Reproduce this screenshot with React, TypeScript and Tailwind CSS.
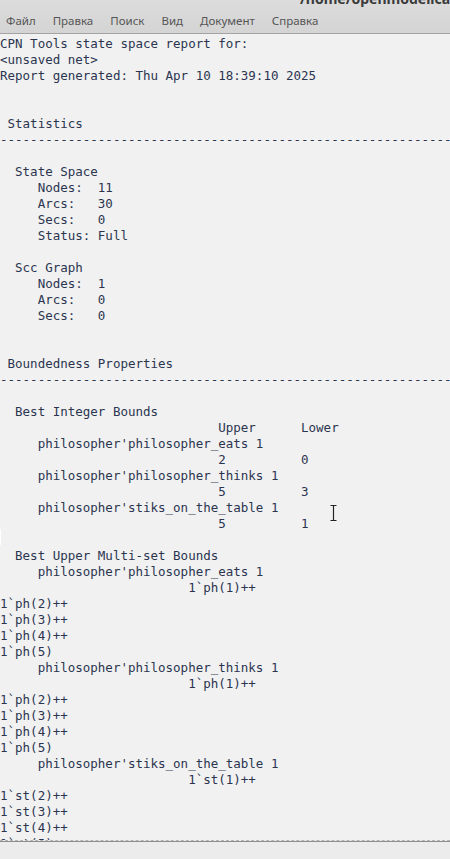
import React from "react";

const mono = { fontFamily: '"DejaVu Sans Mono", "Liberation Mono", monospace' };
const sans = { fontFamily: '"Noto Sans", "DejaVu Sans", sans-serif' };

const dashes = "-".repeat(70);
const pad = (n: number) => " ".repeat(n);

const lines: string[] = [
  "CPN Tools state space report for:",
  "<unsaved net>",
  "Report generated: Thu Apr 10 18:39:10 2025",
  "",
  "",
  " Statistics",
  dashes,
  "",
  "  State Space",
  "     Nodes:  11",
  "     Arcs:   30",
  "     Secs:   0",
  "     Status: Full",
  "",
  "  Scc Graph",
  "     Nodes:  1",
  "     Arcs:   0",
  "     Secs:   0",
  "",
  "",
  " Boundedness Properties",
  dashes,
  "",
  "  Best Integer Bounds",
  pad(29) + "Upper" + pad(6) + "Lower",
  "     philosopher'philosopher_eats 1",
  pad(29) + "2" + pad(10) + "0",
  "     philosopher'philosopher_thinks 1",
  pad(29) + "5" + pad(10) + "3",
  "     philosopher'stiks_on_the_table 1",
  pad(29) + "5" + pad(10) + "1",
  "",
  "  Best Upper Multi-set Bounds",
  "     philosopher'philosopher_eats 1",
  pad(25) + "1`ph(1)++",
  "1`ph(2)++",
  "1`ph(3)++",
  "1`ph(4)++",
  "1`ph(5)",
  "     philosopher'philosopher_thinks 1",
  pad(25) + "1`ph(1)++",
  "1`ph(2)++",
  "1`ph(3)++",
  "1`ph(4)++",
  "1`ph(5)",
  "     philosopher'stiks_on_the_table 1",
  pad(25) + "1`st(1)++",
  "1`st(2)++",
  "1`st(3)++",
  "1`st(4)++",
  "1`st(5)",
  "",
];

const menu = ["Файл", "Правка", "Поиск", "Вид", "Документ", "Справка"];

const App = () => {
  return (
    <div className="w-[450px] h-[859px] flex flex-col bg-[#ececec] overflow-hidden">
      <div className="h-[33px] bg-gradient-to-b from-[#dcdcdc] to-[#d4d4d4] flex flex-col">
        <div className="h-[8px] overflow-hidden">
          <div
            className="ml-[300px] mt-[-9px] whitespace-nowrap text-[14px] font-bold text-[#3a3a3a] leading-[16px]"
            style={sans}
          >
            /home/openmodelica/philosophers
          </div>
        </div>
        <div className="flex items-center h-[25px] pl-[6px] gap-[17px] text-[11.5px] text-[#555]" style={sans}>
          {menu.map((m) => (
            <span key={m}>{m}</span>
          ))}
        </div>
      </div>
      <div className="h-px bg-[#a3a3a3]" />
      <div className="relative h-[807px] overflow-hidden bg-[#f1f1f1] pt-[2px] border-b border-dashed border-[#b4b4b4]">
        <div className="text-[12.5px] leading-[16px] text-[#2b3550]" style={mono}>
          {lines.map((l, i) => (
            <div key={i} className="h-[16px] whitespace-pre">
              {l}
            </div>
          ))}
        </div>
        <div className="absolute left-0 top-[495px] w-px h-[16px] bg-white" />
        <svg className="absolute left-[329px] top-[470px]" width="9" height="18" viewBox="0 0 9 18">
          <path
            d="M1.5 1.5h6M1.5 16.5h6M4.5 1.5v15"
            stroke="#f4f4f4"
            strokeWidth="3.2"
            fill="none"
          />
          <path
            d="M1.5 1.5h6M1.5 16.5h6M4.5 1.5v15"
            stroke="#222"
            strokeWidth="1.2"
            fill="none"
          />
        </svg>
      </div>
      <div className="h-px bg-[#8e8e8e]" />
      <div className="flex-1 bg-[#ececec]" />
    </div>
  );
};

export default App;
